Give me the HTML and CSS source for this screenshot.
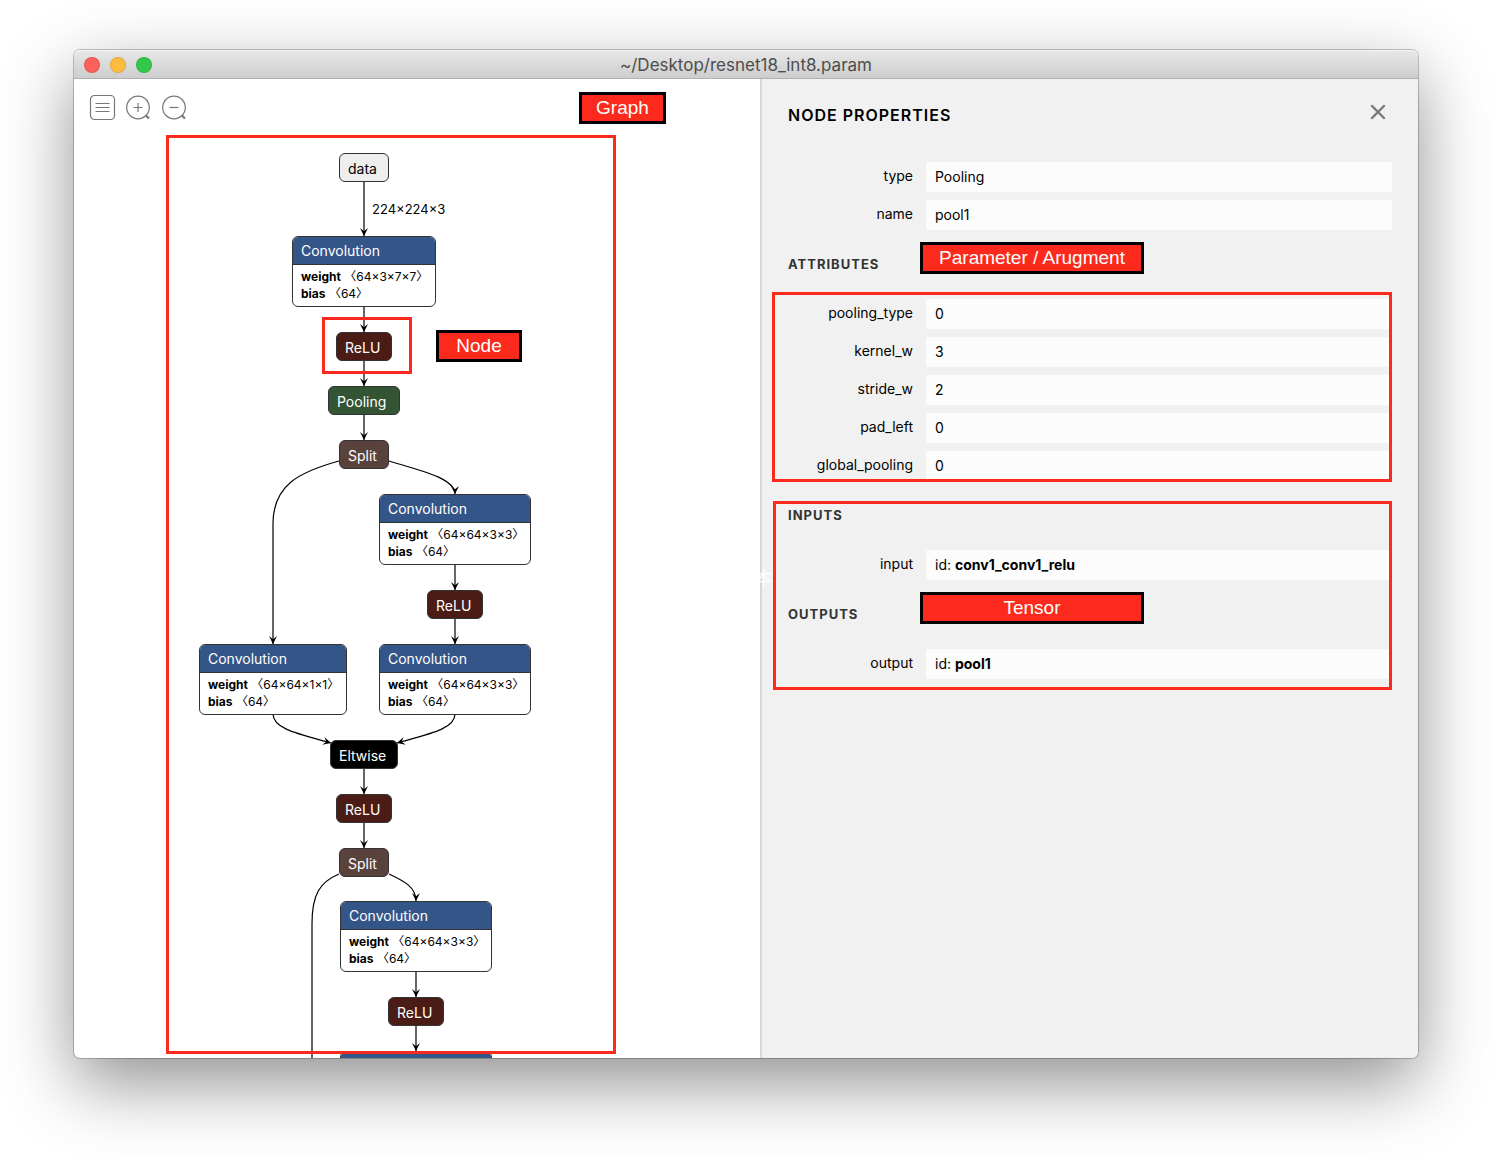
FILE: index.html
```html
<!DOCTYPE html>
<html lang="en">
<head>
<meta charset="utf-8">
<title>~/Desktop/resnet18_int8.param</title>
<link rel="stylesheet" href="styles.css">
</head>
<body>
<main class="window">
  <header class="titlebar">
    <div class="lights">
      <button class="light light-close" aria-label="Close window"></button>
      <button class="light light-min" aria-label="Minimize window"></button>
      <button class="light light-max" aria-label="Zoom window"></button>
    </div>
    <h1 class="title">~/Desktop/resnet18_int8.param</h1>
  </header>

  <div class="panes">
    <section class="graph">
      <div class="canvas">
        <svg class="edges" aria-hidden="true">
          <defs>
            <marker id="arrow" viewBox="0 0 10 10" refX="10" refY="5" markerWidth="8" markerHeight="8" markerUnits="userSpaceOnUse" orient="auto">
              <path d="M0 0L10 5L0 10L4 5Z"/>
            </marker>
          </defs>
          <path class="edge" d="M290 103V157"/>
          <path class="edge" d="M290 227V253"/>
          <path class="edge" d="M290 281V307"/>
          <path class="edge" d="M290 335V361"/>
          <path class="edge" d="M265 382C225 393 199 406 199 445V565"/>
          <path class="edge" d="M315 382C345 391 381 399 381 415"/>
          <path class="edge" d="M381 485V511"/>
          <path class="edge" d="M381 539V565"/>
          <path class="edge" d="M199 635C199 650 225 655 257 664"/>
          <path class="edge" d="M381 635C381 650 355 655 323 664"/>
          <path class="edge" d="M290 689V715"/>
          <path class="edge" d="M290 743V769"/>
          <path class="edge" d="M265 795C246 803 238 815 238 845V1200"/>
          <path class="edge" d="M315 795C330 802 342 808 342 822"/>
          <path class="edge" d="M342 892V918"/>
          <path class="edge" d="M342 946V972"/>
        </svg>

        <div class="node data" style="left:265px;top:74px;width:50px">data</div>
        <span class="edge-label" style="left:298px;top:121px">224×224×3</span>
        <div class="node conv" style="left:218px;top:157px;width:144px">
          <div class="op">Convolution</div>
          <div class="params"><div><b>weight</b> 〈64×3×7×7〉</div><div><b>bias</b> 〈64〉</div></div>
        </div>
        <div class="node relu" style="left:262px;top:253px;width:56px">ReLU</div>
        <div class="node pool" style="left:254px;top:307px;width:72px">Pooling</div>
        <div class="node split" style="left:265px;top:361px;width:50px">Split</div>
        <div class="node conv" style="left:305px;top:415px;width:152px">
          <div class="op">Convolution</div>
          <div class="params"><div><b>weight</b> 〈64×64×3×3〉</div><div><b>bias</b> 〈64〉</div></div>
        </div>
        <div class="node relu" style="left:353px;top:511px;width:56px">ReLU</div>
        <div class="node conv" style="left:125px;top:565px;width:148px">
          <div class="op">Convolution</div>
          <div class="params"><div><b>weight</b> 〈64×64×1×1〉</div><div><b>bias</b> 〈64〉</div></div>
        </div>
        <div class="node conv" style="left:305px;top:565px;width:152px">
          <div class="op">Convolution</div>
          <div class="params"><div><b>weight</b> 〈64×64×3×3〉</div><div><b>bias</b> 〈64〉</div></div>
        </div>
        <div class="node eltwise" style="left:256px;top:661px;width:68px">Eltwise</div>
        <div class="node relu" style="left:262px;top:715px;width:56px">ReLU</div>
        <div class="node split" style="left:265px;top:769px;width:50px">Split</div>
        <div class="node conv" style="left:266px;top:822px;width:152px">
          <div class="op">Convolution</div>
          <div class="params"><div><b>weight</b> 〈64×64×3×3〉</div><div><b>bias</b> 〈64〉</div></div>
        </div>
        <div class="node relu" style="left:314px;top:918px;width:56px">ReLU</div>
        <div class="node conv" style="left:266px;top:972px;width:152px">
          <div class="op"></div>
        </div>

        <div class="frame frame-graph"></div>
        <div class="frame frame-node"></div>
        <div class="callout callout-node">Node</div>
        <div class="callout callout-graph">Graph</div>
      </div>

      <nav class="toolbar">
        <button class="tool" aria-label="Menu">
          <svg viewBox="0 0 28 28"><rect x="1.500" y="1.500" width="24" height="24" rx="4"/><path d="M6.500 9.500h14M6.500 13.500h14M6.500 17.500h14"/></svg>
        </button>
        <button class="tool" aria-label="Zoom in">
          <svg viewBox="0 0 28 28"><circle cx="13" cy="13.500" r="11.300"/><path d="M8.500 13.500h9M13 9v9"/><path class="handle" d="M20.500 21l3.500 3.500"/></svg>
        </button>
        <button class="tool" aria-label="Zoom out">
          <svg viewBox="0 0 28 28"><circle cx="13" cy="13.500" r="11.300"/><path d="M8.500 13.500h9"/><path class="handle" d="M20.500 21l3.500 3.500"/></svg>
        </button>
      </nav>
    </section>

    <aside class="sidebar">
      <span class="ghost" lang="zh">本</span>
      <div class="sidebar-head">
        <h2>NODE PROPERTIES</h2>
        <button class="close" aria-label="Close">
          <svg viewBox="0 0 16 16"><path d="M2 2l12 12M14 2L2 14"/></svg>
        </button>
      </div>

      <div class="rows">
        <div class="row"><label for="type">type</label><input id="type" value="Pooling" readonly></div>
        <div class="row"><label for="name">name</label><input id="name" value="pool1" readonly></div>
      </div>

      <div class="group">
        <h3>ATTRIBUTES</h3>
        <div class="callout callout-side">Parameter / Arugment</div>
        <div class="rows">
          <div class="row"><label for="ptype">pooling_type</label><input id="ptype" value="0" readonly></div>
          <div class="row"><label for="kernel">kernel_w</label><input id="kernel" value="3" readonly></div>
          <div class="row"><label for="stride">stride_w</label><input id="stride" value="2" readonly></div>
          <div class="row"><label for="pad">pad_left</label><input id="pad" value="0" readonly></div>
          <div class="row"><label for="global">global_pooling</label><input id="global" value="0" readonly></div>
          <div class="frame frame-attributes"></div>
        </div>
      </div>

      <div class="tensors">
        <div class="group">
          <h3>INPUTS</h3>
          <div class="rows">
            <div class="row"><label for="in">input</label><output id="in">id: <b>conv1_conv1_relu</b></output></div>
          </div>
        </div>
        <div class="group">
          <h3>OUTPUTS</h3>
          <div class="callout callout-side">Tensor</div>
          <div class="rows">
            <div class="row"><label for="out">output</label><output id="out">id: <b>pool1</b></output></div>
          </div>
        </div>
        <div class="frame frame-tensors"></div>
      </div>
    </aside>
  </div>
</main>
</body>
</html>
```
FILE: styles.css
```css
* { box-sizing: border-box; }

body {
  margin: 0;
  min-height: 100vh;
  padding: 50px 74px 98px;
  display: flex;
  background: #fff;
  color: #000;
  font: 14px/20px Inter, "Noto Sans CJK SC", sans-serif;
}

button {
  padding: 0;
  border: 0;
  background: none;
}

h1, h2, h3 { margin: 0; }

.window {
  flex: 1;
  display: flex;
  flex-direction: column;
  border-radius: 6px;
  background: #fff;
  box-shadow: 0 0 0 1px rgba(0, 0, 0, .22), 0 25px 70px rgba(0, 0, 0, .44);
}

.titlebar {
  display: grid;
  grid-template-columns: 1fr auto 1fr;
  align-items: center;
  height: 29px;
  padding: 1px 10px 0;
  border-bottom: 1px solid #b1b1b1;
  border-radius: 6px 6px 0 0;
  background: linear-gradient(#e8e8e8, #cdcdcd);
  box-shadow: inset 0 1px #f4f4f4;
}

.lights { display: flex; gap: 10px; }

.light {
  width: 16px;
  height: 16px;
  border: 1px solid rgba(0, 0, 0, .1);
  border-radius: 50%;
}

.light-close { background: #fc605c; }
.light-min { background: #fdbc40; }
.light-max { background: #34c84a; }

.title {
  padding-top: 1px;
  color: #4d4d4d;
  font-size: 17px;
  font-weight: 400;
}

.panes {
  flex: 1;
  display: grid;
  grid-template-columns: 686fr 658fr;
}

.graph { position: relative; }

.canvas {
  position: absolute;
  inset: 0;
  overflow: hidden;
  border-radius: 0 0 0 6px;
}

.edges { position: absolute; width: 100%; height: 100%; }

.edge {
  fill: none;
  stroke: #000;
  stroke-width: 1.2;
  marker-end: url(#arrow);
}

.node {
  position: absolute;
  padding: 4px 8px;
  line-height: 21px;
  border: 1px solid #333;
  border-radius: 6px;
  color: #fff;
  white-space: nowrap;
}

.data { background: #eee; color: #000; }
.relu { background: #4b1b16; }
.pool { background: #335533; }
.split { background: #59423b; }
.eltwise { background: #000; }

.node:not(.conv) { height: 29px; }

.conv {
  padding: 0;
  background: #fff;
  color: #000;
  overflow: hidden;
}

.op {
  height: 28px;
  padding: 4px 8px;
  line-height: 20px;
  border-bottom: 1px solid #333;
  background: #335588;
  color: #fff;
}

.params {
  padding: 3px 8px;
  font-size: 12px;
  line-height: 17px;
  height: 41px;
}

.edge-label { position: absolute; font-size: 13px; line-height: 18px; }

.toolbar {
  position: relative;
  display: flex;
  gap: 8px;
  width: max-content;
  padding: 15px;
}

.tool { width: 28px; height: 28px; }

.tool svg {
  display: block;
  width: 28px;
  height: 28px;
  fill: none;
  stroke: #777;
  stroke-width: 1.2;
}

.tool .handle { stroke-width: 2.2; }

.sidebar {
  position: relative;
  padding: 20px 26px;
  border-left: 2px solid #d8d8d8;
  border-radius: 0 0 6px 0;
  background: #f1f1f1;
}

.ghost {
  position: absolute;
  left: -7px;
  top: 489px;
  color: #fff;
  font-size: 17px;
}

.sidebar-head {
  display: flex;
  justify-content: space-between;
  height: 63px;
}

h2 {
  font-size: 16px;
  font-weight: 600;
  line-height: 32px;
  letter-spacing: 1px;
}

.close { width: 28px; height: 26px; }
.close svg { display: block; width: 16px; height: 16px; margin: 0 6px; }
.close path { fill: none; stroke: #777; stroke-width: 2.4; stroke-linecap: round; }

.group { position: relative; }

h3 {
  padding: 24px 0;
  color: #333;
  font-size: 13px;
  font-weight: 700;
  line-height: 21px;
  letter-spacing: 1px;
}

.rows {
  position: relative;
  display: grid;
  gap: 8px;
}

.row {
  display: grid;
  grid-template-columns: 125px 1fr;
  column-gap: 13px;
}

.row label {
  padding-top: 4px;
  text-align: right;
}

.row input, .row output {
  height: 30px;
  width: 100%;
  padding: 0 9px;
  border: 0;
  border-radius: 2px;
  background: #fcfcfc;
  color: #000;
  font: inherit;
  line-height: 30px;
}

.frame {
  position: absolute;
  border: 3px solid #fc2a1c;
  pointer-events: none;
}

.frame-graph { left: 92px; top: 56px; width: 450px; height: 919px; }
.frame-node { left: 248px; top: 238px; width: 90px; height: 57px; }
.frame-attributes { inset: -7px 0 -1px -16px; }

.tensors { position: relative; }
.frame-tensors { inset: 20px 0 -11px -15px; }

.callout {
  position: absolute;
  height: 32px;
  border: 3px solid #000;
  background: #fc2a1c;
  color: #fff;
  font: 19px/26px "Liberation Sans", sans-serif;
  text-align: center;
}

.callout-graph { left: 505px; top: 13px; width: 87px; }
.callout-node { left: 362px; top: 251px; width: 86px; }
.callout-side { left: 132px; top: 12px; width: 224px; }
```
